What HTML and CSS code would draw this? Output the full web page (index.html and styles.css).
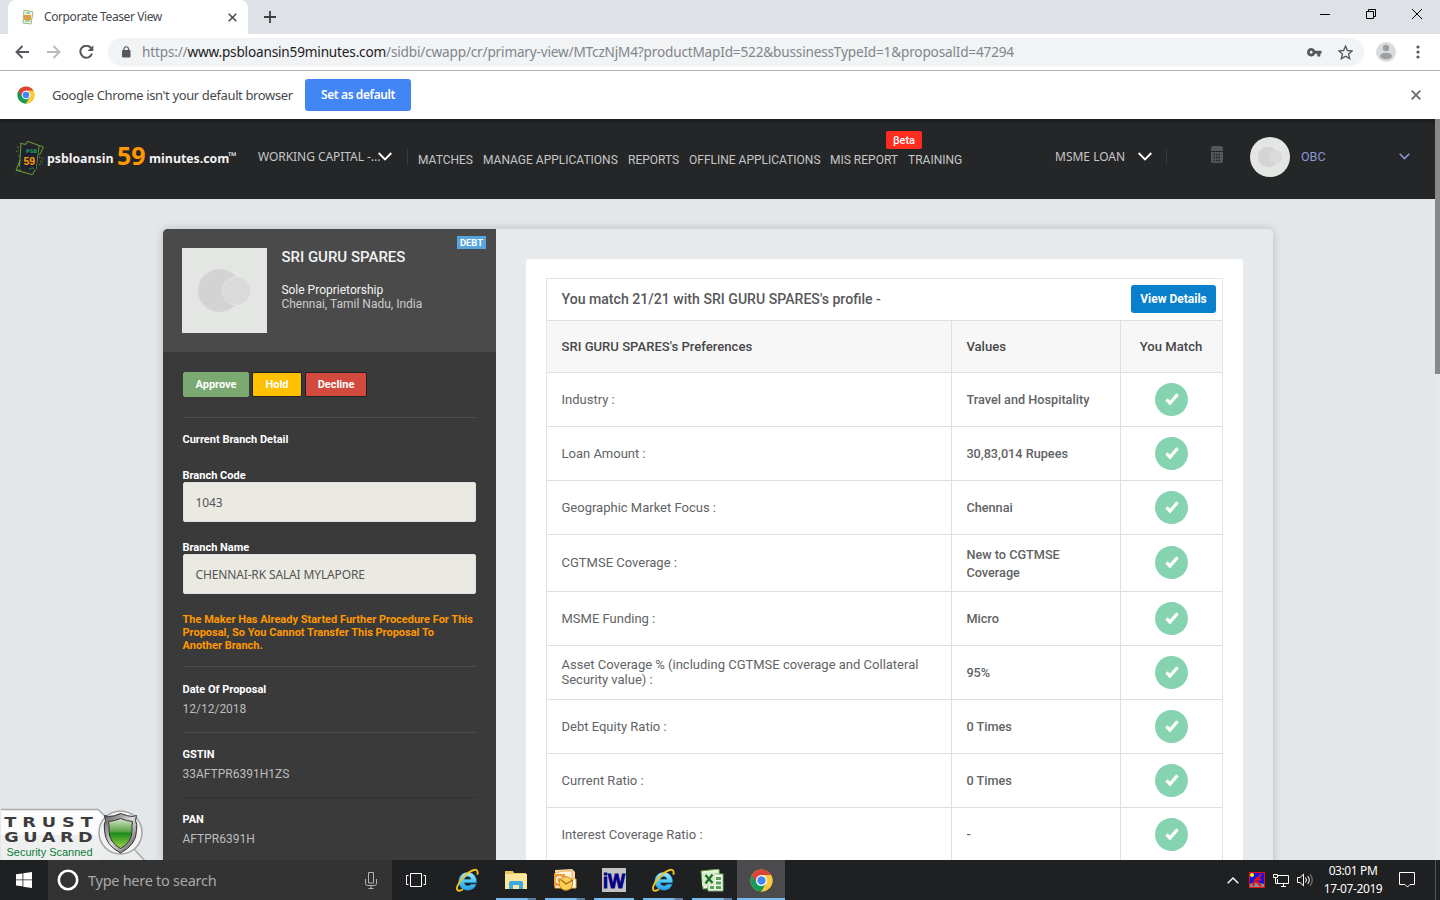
FILE: index.html
```html
<!DOCTYPE html>
<html lang="en">
<head>
<meta charset="utf-8">
<title>Corporate Teaser View</title>
<link rel="stylesheet" href="styles.css">
</head>
<body>
<svg class="defs" width="0" height="0">
  <defs>
    <linearGradient id="ieBlue" x1="0" y1="0" x2="0" y2="1"><stop offset="0" stop-color="#a8ecff"/><stop offset=".5" stop-color="#4cc8f5"/><stop offset="1" stop-color="#2aa0e6"/></linearGradient>
    <linearGradient id="shieldGreen" x1="0" y1="0" x2="0" y2="1"><stop offset="0" stop-color="#d8e6cf"/><stop offset=".42" stop-color="#5da548"/><stop offset=".5" stop-color="#1f8a1c"/><stop offset="1" stop-color="#a0d64c"/></linearGradient>
    <linearGradient id="steel" x1="0" y1="0" x2="1" y2="1"><stop offset="0" stop-color="#555"/><stop offset=".5" stop-color="#ddd"/><stop offset="1" stop-color="#444"/></linearGradient>
    <symbol id="chrome" viewBox="0 0 48 48">
      <circle cx="24" cy="24" r="23" fill="#fbc93a"/>
      <path d="M24 24 L4.1 12.5 A23 23 0 0 0 24 47 L34 29.5Z" fill="#119d58"/>
      <path d="M24 24 L14 29.7 L4.1 12.5 A23 23 0 0 1 43.9 12.5 H24Z" fill="#dc4437"/>
      <path d="M24 12.5H43.9A23 23 0 0 1 24 47L34 29.5Z" fill="#fbc93a"/>
      <circle cx="24" cy="24" r="11.5" fill="#fff"/><circle cx="24" cy="24" r="8.8" fill="#4285f4"/>
    </symbol>
    <symbol id="ie" viewBox="0 0 24 24">
      <path d="M21.600 14.700H9.300c.2 2 1.600 3 3.500 3 1.500 0 2.600-.4 3.200-1.500h5.200c-1.200 3.700-4.300 6-8.500 6-5.200 0-8.900-3.700-8.900-8.900 0-5 3.800-9 8.900-9 5.400 0 9.200 4.300 8.900 10.400zM9.400 11.300h6.600c-.2-1.700-1.400-2.800-3.200-2.800s-3.100 1.100-3.400 2.800z" fill="url(#ieBlue)" stroke="#1f83c4" stroke-width=".4"/>
      <path d="M22.300 6.700c.6-2.300.6-4.200-1.200-4.800C18.600 1 12.900 4.400 8.500 9.100 3.500 14.400.7 20.400 2.600 22.200c1.100 1 3.300.3 5.400-1" fill="none" stroke="#f4c21c" stroke-width="1.900"/>
    </symbol>
    <symbol id="tick" viewBox="0 0 33 33">
      <circle cx="16.500" cy="16.500" r="16.500" fill="#86d3b1"/>
      <path d="M11.500 16.400l3.500 3.700 7.600-8.900" fill="none" stroke="#fff" stroke-width="3.200"/>
    </symbol>
    <symbol id="notes" viewBox="0 0 30 36">
      <g fill="none" stroke="#66a03e" stroke-width="1"><path d="M5 3.500l6 .8 1.500-3L28.500 7l-4 8M6 3l-1.500 24M2 30.500l15.500 4.200 2.500-5M5 20L1 30.500l5-.5M24 6l-3 23.500"/><path d="M2 8l2-2M1 12l3-2M3 16l2-1M24 17l5 2M25 21l3 1M24 25l3-2" stroke-dasharray="1 1"/></g>
      <path d="M7 6l16 1.500-2 21.500L6 28z" fill="#1f2030"/>
      <text x="11" y="12.500" class="notes-psb">PSB</text><text x="8.500" y="24.800" class="notes-num">59</text>
      <path d="M14 29.500q4-3 5-.5" fill="none" stroke="#239554"/>
    </symbol>
  </defs>
</svg>

<header class="titlebar">
  <div class="tab">
    <svg class="favicon" viewBox="0 0 14 16" width="14" height="16"><path d="M3 1l9 2-2 12-8-1z" fill="#eef4ea" stroke="#94bd79"/><path d="M5 4h4M4 12h5" stroke="#5aaa68"/><rect x="3" y="6" width="7" height="5" fill="#f29a20"/><path d="M5 7v3M8 7v3" stroke="#a8a9c9"/></svg>
    <span class="tab-title">Corporate Teaser View</span>
    <svg class="tab-x" width="9" height="9" viewBox="0 0 9 9"><path d="M.7.700l7.600 7.600M8.300.700L.7 8.300" stroke="#4a4d51" stroke-width="1.600"/></svg>
  </div>
  <svg class="newtab" width="12" height="12" viewBox="0 0 12 12"><path d="M6 0v12M0 6h12" stroke="#3c4043" stroke-width="1.800"/></svg>
  <div class="winbtns">
    <svg width="10" height="11"><path d="M0 6.500h10" stroke="#000"/></svg>
    <svg width="10" height="11"><path d="M.500 3.500h7v7h-7zM2.500 3.500v-2h7v7h-2" fill="none" stroke="#000"/></svg>
    <svg width="10" height="11"><path d="M0 1l10 10M10 1l-10 10" stroke="#000"/></svg>
  </div>
</header>

<div class="toolbar">
  <svg class="back" width="14" height="14" viewBox="0 0 14 14"><path d="M14 7H1.500M7.500 1L1.500 7l6 6" fill="none" stroke="#55585c" stroke-width="1.900"/></svg>
  <svg class="fwd" width="14" height="14" viewBox="0 0 14 14"><path d="M0 7h12.500M6.500 1l6 6-6 6" fill="none" stroke="#b9babc" stroke-width="1.900"/></svg>
  <svg class="reload" width="15" height="14" viewBox="0 0 15 14"><path d="M12.300 3.300A6 6 0 1 0 13 8.700" fill="none" stroke="#55585c" stroke-width="2"/><path d="M14.300.200V6H8.500z" fill="#55585c"/></svg>
  <div class="omnibox">
    <svg width="9" height="12" viewBox="0 0 9 12"><rect y="4" width="8.500" height="7.500" rx="1" fill="#55585c"/><path d="M2 5V3a2.250 2.250 0 0 1 4.500 0v2" fill="none" stroke="#55585c" stroke-width="1.200"/></svg>
    <span class="url">https://<b>www.psbloansin59minutes.com</b>/sidbi/cwapp/cr/primary-view/MTczNjM4?productMapId=522&amp;bussinessTypeId=1&amp;proposalId=47294</span>
    <svg class="key" width="15" height="9" viewBox="0 0 15 9"><path fill-rule="evenodd" d="M4.200 0a4.200 4.200 0 0 1 4 2.800H14.500v3h-1.200V8.500h-3V5.800H8.200A4.200 4.200 0 1 1 4.200 0zm0 2.800a1.400 1.400 0 1 0 .01 0z" fill="#55585c"/></svg>
    <svg class="star" width="15" height="15" viewBox="0 0 24 24"><path d="M12 1.800l3.100 7 7.500.700-5.700 5 1.700 7.400L12 18l-6.600 3.900 1.700-7.400-5.700-5 7.500-.7z" fill="none" stroke="#55585c" stroke-width="2.200"/></svg>
  </div>
  <svg class="person" width="20" height="20" viewBox="0 0 20 20"><circle cx="10" cy="10" r="10" fill="#dadbdd"/><circle cx="10" cy="6" r="3.200" fill="#9d9ea0"/><ellipse cx="10" cy="14" rx="6" ry="3.200" fill="#9d9ea0"/></svg>
  <svg class="dots" width="4" height="14"><circle cx="2" cy="2" r="1.600" fill="#55585c"/><circle cx="2" cy="7" r="1.600" fill="#55585c"/><circle cx="2" cy="12" r="1.600" fill="#55585c"/></svg>
</div>

<div class="infobar">
  <svg width="18" height="18"><use href="#chrome"/></svg>
  <span class="info-text">Google Chrome isn't your default browser</span>
  <button class="set-default"><span>Set as default</span></button>
  <svg class="info-x" width="10" height="10" viewBox="0 0 10 10"><path d="M.7.700l8.600 8.600M9.300.700L.7 9.300" stroke="#6b6e72" stroke-width="1.900"/></svg>
</div>

<div class="viewport">
  <div class="page">
    <nav class="nav">
      <div class="logo">
        <svg class="logo-mark" width="30" height="36"><use href="#notes"/></svg>
        <span class="logo-a">psbloansin</span><span class="logo-59">59</span><span class="logo-b">minutes.com</span><span class="logo-tm">™</span>
      </div>
      <div class="pick pick-a"><span>WORKING CAPITAL -...</span><svg width="14" height="9" viewBox="0 0 14 9"><path d="M.7 1L7 7.500 13.300 1" fill="none" stroke="#fff" stroke-width="1.800"/></svg></div>
      <div class="menu">
        <span class="m1">MATCHES</span><span class="m2">MANAGE APPLICATIONS</span><span class="m3">REPORTS</span><span class="m4">OFFLINE APPLICATIONS</span><span class="m5">MIS REPORT<i class="beta">βeta</i></span><span class="m6">TRAINING</span>
      </div>
      <div class="pick pick-b"><span>MSME LOAN</span><svg width="14" height="9" viewBox="0 0 14 9"><path d="M.7 1L7 7.500 13.300 1" fill="none" stroke="#fff" stroke-width="1.800"/></svg></div>
      <svg class="calc" width="12" height="17" viewBox="0 0 12 17"><path d="M0 5V2q0-2 2-2h8q2 0 2 2v3zM0 6h12v9q0 2-2 2H2q-2 0-2-2z" fill="#555658"/><path d="M2.500 8.500h7M2.500 11.500h7M2.500 14.500h7" stroke="#252628" stroke-width="1.500" stroke-dasharray="1.500 1"/></svg>
      <svg class="avatar" width="40" height="40" viewBox="0 0 40 40"><circle cx="20" cy="20" r="20" fill="#e4e6e3"/><circle cx="18" cy="20" r="10.200" fill="#d3d4d3"/><circle cx="25.500" cy="20" r="6.800" fill="#d9dad9"/></svg>
      <span class="obc">OBC</span>
      <svg class="obc-arrow" width="11" height="7" viewBox="0 0 11 7"><path d="M.7.700l4.800 4.900L10.300.700" fill="none" stroke="#8b98d8" stroke-width="1.500"/></svg>
    </nav>

    <main class="card">
      <aside class="side">
        <div class="side-head">
          <svg width="85" height="85" viewBox="0 0 85 85"><rect width="85" height="85" fill="#e4e6e3"/><circle cx="37.500" cy="42.500" r="21.500" fill="#d2d3d2"/><circle cx="54.500" cy="43" r="14.200" fill="#d9dad9" stroke="#e4e6e3"/></svg>
          <div class="who"><h1>SRI GURU SPARES</h1><p class="kind">Sole Proprietorship</p><p class="place">Chennai, Tamil Nadu, India</p></div>
          <span class="debt">DEBT</span>
        </div>
        <div class="side-body">
          <div class="actions"><button class="approve">Approve</button><button class="hold">Hold</button><button class="decline">Decline</button></div>
          <h2>Current Branch Detail</h2>
          <label>Branch Code<span class="field">1043</span></label>
          <label>Branch Name<span class="field">CHENNAI-RK SALAI MYLAPORE</span></label>
          <p class="warn">The Maker Has Already Started Further Procedure For This<br>Proposal, So You Cannot Transfer This Proposal To<br>Another Branch.</p>
          <dl class="first"><dt>Date Of Proposal</dt><dd>12/12/2018</dd></dl>
          <dl><dt>GSTIN</dt><dd>33AFTPR6391H1ZS</dd></dl>
          <dl class="dim"><dt>PAN</dt><dd>AFTPR6391H</dd></dl>
        </div>
      </aside>
      <section class="panel">
        <div class="match">
          <div class="match-head"><span>You match 21/21 with SRI GURU SPARES's profile -</span><button>View Details</button></div>
          <div class="row head"><b>SRI GURU SPARES's Preferences</b><b>Values</b><b>You Match</b></div>
          <div class="row"><span>Industry :</span><b>Travel and Hospitality</b><svg><use href="#tick"/></svg></div>
          <div class="row"><span>Loan Amount :</span><b>30,83,014 Rupees</b><svg><use href="#tick"/></svg></div>
          <div class="row"><span>Geographic Market Focus :</span><b>Chennai</b><svg><use href="#tick"/></svg></div>
          <div class="row tall"><span>CGTMSE Coverage :</span><b>New to CGTMSE<br>Coverage</b><svg><use href="#tick"/></svg></div>
          <div class="row"><span>MSME Funding :</span><b>Micro</b><svg><use href="#tick"/></svg></div>
          <div class="row two"><span>Asset Coverage % (including CGTMSE coverage and Collateral<br>Security value) :</span><b>95%</b><svg><use href="#tick"/></svg></div>
          <div class="row"><span>Debt Equity Ratio :</span><b>0 Times</b><svg><use href="#tick"/></svg></div>
          <div class="row"><span>Current Ratio :</span><b>0 Times</b><svg><use href="#tick"/></svg></div>
          <div class="row"><span>Interest Coverage Ratio :</span><b>-</b><svg><use href="#tick"/></svg></div>
        </div>
      </section>
    </main>
  </div>
  <div class="scroll"><div class="thumb"></div></div>
  <svg class="trust" width="148" height="52" viewBox="0 0 148 52">
    <path d="M1 1.500H98L104 7V51H1z" fill="#fbfcfb"/><path d="M1 27H104V52H1z" fill="#eef0ef"/>
    <path d="M100 52l5-12h30l10 13z" fill="#e9edeb"/>
    <path d="M1 1.500H98L107 10M134 41l11 12" fill="none" stroke="#aaa" stroke-width="1.500"/>
    <circle cx="120.500" cy="24.500" r="21.500" fill="#f2f2f2" stroke="#a4a4a4" stroke-width="1.500"/>
    <path d="M120.500 5.500q8 3 12 3l4-1-1 5q2 3 1 10 0 14-16 22.500-15.500-8-16-22.500-1-6 1-10l-1-5 4 1q6 0 12-3z" fill="url(#steel)" stroke="#333"/>
    <path d="M120.500 10.500q6 2.500 12 3-1 5-.5 9 0 12-11.500 18-11.500-6-11.500-18 .5-4-.500-9 6-.500 12-3z" fill="url(#shieldGreen)" stroke="#333"/>
    <g transform="scale(1.22 1)">
      <text x="3.500" y="18.700" class="trust-word" textLength="72.500">TRUST</text>
      <text x="3.500" y="33.700" class="trust-word" textLength="72.500">GUARD</text>
    </g>
    <text x="6.500" y="47.800" class="trust-sub" textLength="86">Security Scanned</text>
  </svg>
</div>

<footer class="taskbar">
  <div class="start"><svg width="16" height="16" viewBox="0 0 16 16"><path d="M0 2.300l6.500-.9v6H0zM7.300 1.200L16 0v7.400H7.300zM0 8.300h6.500v6L0 13.500zM7.300 8.300H16V16l-8.700-1.200z" fill="#fff"/></svg></div>
  <div class="search">
    <svg width="22" height="22"><circle cx="11" cy="11" r="9.200" fill="none" stroke="#fff" stroke-width="2.600"/></svg>
    <span>Type here to search</span>
    <svg class="mic" width="12" height="17" viewBox="0 0 12 17"><path d="M3.500.500h5v10.500h-5zM.500 7v4.500q0 2 2 2h7q2 0 2-2V7M6 13.500v3M3.500 16.500h5" fill="none" stroke="#b4b4b4"/></svg>
  </div>
  <div class="app plain"><svg width="20" height="14"><path d="M4.500.500h11v13h-11zM2.500 2.500h-2v9h2M17.500 2.500h2v9h-2" fill="none" stroke="#fff"/></svg></div>
  <div class="app plain ie-first"><svg width="24" height="24"><use href="#ie"/></svg></div>
  <div class="app multi"><svg width="22" height="18" viewBox="0 0 22 18"><path d="M0 0h8l1 2h12v16H0z" fill="#eac75b"/><path d="M0 3h22v15H0z" fill="#fce69d"/><path d="M4 18v-6q0-2 2-2h10q2 0 2 2v6h-4v-4H8v4z" fill="#3ba8df"/></svg></div>
  <div class="app multi"><svg width="24" height="23" viewBox="0 0 24 23"><path d="M2 1l17-1 3 3v16H2z" fill="#f9d9a2"/><path d="M2 4q8-3 17-2v17H2z" fill="#fff4df" stroke="#efac55"/><path d="M1 5h11v12H1z" fill="#f39a35"/><path d="M3.500 11a3 3 0 1 1 6 0 3 3 0 0 1-6 0" fill="none" stroke="#fff" stroke-width="1.500"/><path d="M8 10h15v9H8z" fill="#fff" stroke="#e5b03d"/><circle cx="13" cy="14.500" r="6.800" fill="#ffce59" stroke="#c88a19"/><path d="M8.500 11l4.500 4 7-4" fill="none" stroke="#a8690b" stroke-width="1.300"/></svg></div>
  <div class="app"><svg width="24" height="24" viewBox="0 0 24 24"><rect width="24" height="24" fill="#c3c3c3"/><text x="1" y="20" class="iw" textLength="22" lengthAdjust="spacingAndGlyphs">iW</text></svg></div>
  <div class="app multi"><svg width="24" height="24"><use href="#ie"/></svg></div>
  <div class="app multi"><svg width="24" height="23" viewBox="0 0 24 23"><path d="M1 2l18-2 1 19-17 1z" fill="#eaf5df" stroke="#5f9d43"/><path d="M12 5h11v17H8v-5z" fill="#f4faef" stroke="#7baf62"/><path d="M16 8h5v3h-5zM16 12.500h5v3h-5zM16 17h5v3h-5zM10 17h4v3h-4z" fill="#57a353"/><path d="M2 4l13-1v13l-13 1z" fill="#d5eac7"/><path d="M5.500 6l7 8M12.500 5.500l-7 9" stroke="#1c6b2a" stroke-width="2.200"/></svg></div>
  <div class="app active"><svg width="23" height="23"><use href="#chrome"/></svg></div>
  <div class="tray">
    <svg width="12" height="7"><path d="M.7 6.300L6 1l5.300 5.300" fill="none" stroke="#fff" stroke-width="1.400"/></svg>
    <svg class="ant" width="16" height="16" viewBox="0 0 16 16"><rect width="16" height="16" fill="#f00b12"/><rect x="1" y="1" width="14" height="14" fill="#1115e4"/><circle cx="3" cy="3" r="2" fill="#fff100"/><path d="M1 12l5-2 9 2v3H1z" fill="#8b8b8b"/><path d="M12 2l-2 3-4 3-2 6M10 5l-2 5 4 4M7 6l5 2" stroke="#f00b12" stroke-width="2" fill="none"/></svg>
    <svg class="net" width="17" height="14"><path d="M5 2.500h10.500v8H4.500V6M8 13.500h5M10.500 10.500v3M.500 1.500h4v3h-4zM2.500 4.500v6h2" fill="none" stroke="#fff"/></svg>
    <svg class="vol" width="17" height="14" viewBox="0 0 17 14"><path d="M.500 4.500h2.500l3.500-3.300v11.600L3 9.500H.500z" fill="none" stroke="#fff"/><path d="M8.500 4.500q2 2.500 0 5M10.700 3q3.200 4 0 8" fill="none" stroke="#fff"/><path d="M13 1q4.500 6 0 12" fill="none" stroke="#888"/></svg>
    <div class="clock"><span class="time">03:01 PM</span><span class="date">17-07-2019</span></div>
    <svg class="note" width="16" height="16"><path d="M.500.500h15v12H11l-2.500 2.600L6 12.500H.500z" fill="none" stroke="#fff"/></svg>
  </div>
</footer>
</body>
</html>
```
FILE: styles.css
```css
* { box-sizing: border-box; }
body { margin: 0; width: 1440px; height: 900px; overflow: hidden; display: flex; flex-direction: column; font-family: Roboto, "Liberation Sans", sans-serif; }
h1, h2, p, dl, dd { margin: 0; }
button { font: inherit; border: 0; padding: 0; }
svg { display: block; flex: none; }
span, b, i { white-space: nowrap; }
.defs { position: absolute; }

.titlebar { height: 34px; background: #dee1e6; display: flex; align-items: flex-start; flex: none; }
.tab { width: 240px; height: 34px; margin-left: 8px; background: #fff; border-radius: 8px 8px 0 0; display: flex; align-items: center; padding-left: 13px; }
.tab-title { font: 12px/16px "Noto Sans", sans-serif; color: #45484c; margin-left: 9px; width: 184px; letter-spacing: -.4px; }
.newtab { margin: 11px 0 0 16px; }
.winbtns { display: flex; gap: 36px; margin: 8px 0 0 auto; padding-right: 18px; }

.toolbar { height: 37px; flex: none; background: #fff; border-bottom: 1px solid #b2b2b2; display: flex; align-items: center; padding-left: 15px; }
.fwd { margin-left: 18px; }
.reload { margin-left: 18px; }
.omnibox { width: 1256px; height: 28px; margin-left: 14px; border-radius: 14px; background: #f1f3f4; display: flex; align-items: center; padding: 0 11px 0 14px; }
.url { font: 13.600px/20px "Noto Sans", sans-serif; color: #80868b; margin-left: 11px; letter-spacing: -.175px; }
.url b { font-weight: 400; color: #202124; }
.key { margin-left: auto; }
.star { margin-left: 16px; }
.person { margin-left: 12px; }
.dots { margin-left: 20px; }

.infobar { height: 48px; flex: none; background: #fff; display: flex; align-items: center; padding: 0 19px 0 17px; }
.info-text { font: 13px/18px "Noto Sans", sans-serif; color: #45484c; margin-left: 17px; width: 241px; letter-spacing: -.37px; }
.set-default { width: 106px; height: 32px; margin-left: 12px; border-radius: 3px; background: #4285f4; color: #fff; font: 600 12px/32px "Noto Sans", sans-serif; letter-spacing: -.4px; }
.info-x { margin-left: auto; }

.viewport { height: 741px; flex: none; display: flex; background: #e3e7ea; overflow: hidden; position: relative; }
.page { width: 1435px; flex: none; }
.scroll { width: 5px; background: #e6e9eb; }
.thumb { height: 255px; background: #888; }

.nav { height: 80px; background: linear-gradient(#1b1c1e, #252628 5px); display: flex; align-items: center; color: #c5c6c7; }
.logo { display: flex; width: 223px; margin-left: 15px; height: 40px; font-family: "Open Sans", sans-serif; font-weight: 700; color: #f3f3f3; margin-top: -4px; }
.logo-mark { margin: 3px 2px 0 0; }
.logo-a { font-size: 12.300px; line-height: 43px; width: 67px; }
.logo-59 { font-size: 25px; line-height: 37px; width: 29px; margin-left: 3px; color: #ff9800; }
.logo-b { font-size: 12.300px; line-height: 43px; width: 79px; margin-left: 3px; }
.logo-tm { font-size: 11px; line-height: 37px; }
.pick { font: 12px/18px "Noto Sans", sans-serif; display: flex; align-items: center; height: 16px; border-right: 1px solid #393a3c; margin-top: -5px; }
.pick-a { margin-left: 20px; width: 150px; }
.pick-a span { width: 120px; letter-spacing: -.05px; }
.menu { display: flex; font-size: 12px; line-height: 16px; margin: 1px 0 0 10px; }
.m1 { width: 65px; } .m2 { width: 145px; } .m3 { width: 61px; } .m4 { width: 141px; } .m5 { width: 78px; position: relative; } .m6 { width: 54px; }
.beta { position: absolute; left: 56px; top: -21px; width: 36px; height: 18px; background: #ff2c1f; border-radius: 2px; color: #fff; font: 500 11px/19px Roboto, sans-serif; text-align: center; }
.pick-b { margin-left: 93px; width: 112px; }
.pick-b span { width: 83px; letter-spacing: 0; }
.calc { margin: -9px 0 0 44px; }
.avatar { margin: -4px 0 0 27px; }
.obc { font-size: 12.500px; color: #8b98d8; margin: -6px 0 0 11px; width: 98px; }
.obc-arrow { margin-top: -5px; }

.card { width: 1110px; height: 700px; margin: 30px 0 0 163px; display: flex; background: #e6eaed; border-radius: 5px; box-shadow: 0 0 10px rgba(0,0,0,.18); }
.side { width: 333px; background: #3a3a3a; border-radius: 5px 0 0 0; overflow: hidden; }
.side-head { height: 123px; background: #4a4a4a; padding: 19px; display: flex; position: relative; }
.who { margin-left: 14.400px; padding-top: 1px; }
.who h1 { font-size: 15px; line-height: 17px; font-weight: 500; color: #f2f2f2; }
.who p { font-size: 12px; line-height: 14px; color: #ccc; }
.who .kind { color: #f2f2f2; margin-top: 17px; }
.debt { position: absolute; left: 294px; top: 7px; width: 29px; height: 13px; background: #56a5dc; color: #fff; font: 700 9.400px/14px Roboto, sans-serif; text-align: center; }
.side-body { padding: 20px 20px 0; color: #fff; }
.actions { display: flex; gap: 3px; height: 46px; border-bottom: 1px solid #4c4c4c; }
.actions button { height: 25px; border-radius: 2px; color: #fff; font-size: 11px; font-weight: 700; line-height: 23px; border: 1px solid #222; }
.actions .approve { width: 66px; background: #7aa971; border-color: #7aa971; }
.actions .hold { width: 50px; background: #ffc000; }
.actions .decline { width: 62px; background: #d14a3d; }
h2, label, dt { display: block; font-size: 11px; font-weight: 700; line-height: 14px; margin-left: -.5px; }
h2 { margin-top: 15px; }
label { margin-top: 22px; height: 53px; }
label + label { margin-top: 19px; }
.field { display: block; height: 40px; margin: -1px 0 0 .5px; border: 1px solid #dce1e3; border-radius: 2px; background: #eaeae2; color: #555; font: 400 12px/40px "Noto Sans", sans-serif; padding-left: 11.500px; letter-spacing: -.14px; }
.warn { margin: 19px 0 0 -.5px; font-size: 11px; font-weight: 700; line-height: 13px; color: #ff9800; height: 53px; white-space: nowrap; }
dl { height: 65px; border-top: 1px solid #4c4c4c; padding-top: 15px; }
dl.first { height: 66px; padding-top: 16px; }
dl.first dd { margin-top: 5px; }
dl.dim { border-color: #303030; }
dd { font-size: 12px; line-height: 14px; margin: 5px 0 0 -.5px; color: #bdbdbd; }

.panel { width: 717px; height: 680px; margin: 30px 0 0 30px; background: #fff; border-radius: 3px; padding: 19px 20px 0; }
.match { width: 677px; border: 1px solid #e4e4e4; }
.match-head { height: 41px; display: flex; align-items: center; justify-content: space-between; padding: 0 6px 2px 14.500px; font-size: 14.100px; font-weight: 500; color: #58595b; }
.match-head button { width: 85px; height: 28px; background: #0a80cc; color: #fff; border-radius: 3px; font-size: 12px; font-weight: 700; }
.row { height: 54px; border-top: 1px solid #dfdfdf; display: grid; grid-template-columns: 404px 169px 102px; font-size: 13px; color: #626365; }
.row.head { height: 52px; background: #f7f7f7; color: #464749; }
.row.tall { height: 57px; }
.row > * { border-right: 1px solid #dfdfdf; display: block; padding-left: 14.500px; align-content: center; line-height: 15px; }
.row > :last-child { border: 0; }
.row b { font-size: 12.700px; font-weight: 500; line-height: 18px; }
.row.head b { font-size: 13.100px; }
.row > b:nth-child(2) { width: 170px; padding-left: 15.400px; }
.row.head b:last-child { padding: 0; text-align: center; }
.row > span, .row > b:first-child { width: 405px; }
.row svg { width: 33px; height: 33px; padding: 0; place-self: center; }
.row.tall span, .row.two span, .row.tall svg { padding-bottom: 2px; }
.row.tall svg { padding: 0; margin-bottom: 2px; }
.row.tall b { padding-top: 1px; }

.trust { position: absolute; left: 0; bottom: 0; }
.trust-word { font: 700 14.500px "DejaVu Sans", sans-serif; fill: #3d3d40; }
.trust-sub { font: 11px "Liberation Sans", sans-serif; fill: #0b7c35; }
.notes-psb { font: 700 5px "DejaVu Sans", sans-serif; fill: #17a05a; }
.notes-num { font: 700 10.500px "Liberation Sans", sans-serif; fill: #ff9800; }

.taskbar { height: 40px; flex: none; background: #1f2022; display: flex; }
.start { width: 48px; display: flex; align-items: center; justify-content: center; }
.search { width: 344px; background: #333; display: flex; align-items: center; padding-left: 9px; }
.search span { font: 14.500px/20px "Noto Sans", sans-serif; color: #a9a9a9; width: 277px; margin-left: 9px; letter-spacing: -.27px; }
.app { width: 40px; margin-right: 9px; display: flex; align-items: center; justify-content: center; border-bottom: 2px solid #76b9ed; padding-top: 2px; }
.app.plain { border-color: transparent; width: 48px; margin-right: 0; }
.app.plain + .multi { margin-left: 8px; }
.app.plain.ie-first { padding-left: 5px; }
.app.multi { border-image: linear-gradient(90deg, #76b9ed 77%, #587fa2 78%) 1; }
.app.active { width: 48px; margin: 0 0 0 -4px; background: #4b4b4d; }
.tray { margin-left: auto; display: flex; align-items: center; padding-right: 25px; position: relative; }
.tray::after { content: ""; position: absolute; right: 4px; top: 0; width: 1px; height: 40px; background: #55565a; }
.ant { margin-left: 10px; }
.net { margin-left: 8px; }
.vol { margin-left: 7px; }
.clock { width: 62px; margin-left: 8px; display: flex; flex-direction: column; align-items: center; font: 12px/18px "Noto Sans", sans-serif; color: #fff; letter-spacing: -.4px; }
.note { margin-left: 15px; }
.iw { font: 700 21px "Liberation Sans", sans-serif; fill: #050086; stroke: #050086; }
```
